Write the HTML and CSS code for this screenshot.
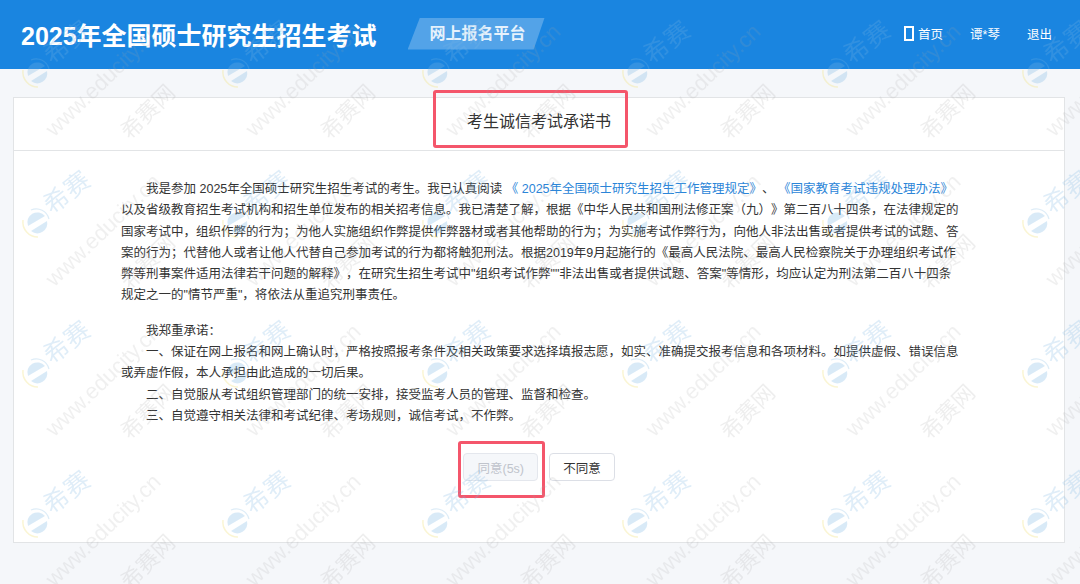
FILE: index.html
```html
<!DOCTYPE html>
<html lang="zh">

<head>
    <meta charset="UTF-8">
    <meta name="viewport" content="width=device-width, initial-scale=1.0">
    <title>考生诚信考试承诺书</title>
    <link rel="stylesheet" href="styles.css">
</head>

<body>
    <!-- 顶部导航 -->
    <header class="top-bar">
        <div class="brand">
            <span class="brand-title">2025年全国硕士研究生招生考试</span>
            <span class="brand-badge">网上报名平台</span>
        </div>
        <nav class="top-nav">
            <a class="nav-link nav-home"><i class="home-icon"></i>首页</a>
            <a class="nav-link">谭*琴</a>
            <a class="nav-link">退出</a>
        </nav>
    </header>

    <!-- 承诺书 -->
    <main class="page">
        <section class="card">
            <div class="card-head">
                <h1 class="card-title"><span class="title-text">考生诚信考试承诺书</span></h1>
            </div>
            <div class="card-body">
                <p class="para">我是参加 2025年全国硕士研究生招生考试的考生。我已认真阅读 <a class="rule-link">《 2025年全国硕士研究生招生工作管理规定》</a>、 <a class="rule-link">《国家教育考试违规处理办法》</a>以及省级教育招生考试机构和招生单位发布的相关招考信息。我已清楚了解，根据《中华人民共和国刑法修正案（九）》第二百八十四条，在法律规定的国家考试中，组织作弊的行为；为他人实施组织作弊提供作弊器材或者其他帮助的行为；为实施考试作弊行为，向他人非法出售或者提供考试的试题、答案的行为；代替他人或者让他人代替自己参加考试的行为都将触犯刑法。根据2019年9月起施行的《最高人民法院、最高人民检察院关于办理组织考试作弊等刑事案件适用法律若干问题的解释》，在研究生招生考试中"组织考试作弊""非法出售或者提供试题、答案"等情形，均应认定为刑法第二百八十四条规定之一的"情节严重"，将依法从重追究刑事责任。</p>
                <p class="para para-gap">我郑重承诺：</p>
                <p class="para">一、保证在网上报名和网上确认时，严格按照报考条件及相关政策要求选择填报志愿，如实、准确提交报考信息和各项材料。如提供虚假、错误信息或弄虚作假，本人承担由此造成的一切后果。</p>
                <p class="para">二、自觉服从考试组织管理部门的统一安排，接受监考人员的管理、监督和检查。</p>
                <p class="para">三、自觉遵守相关法律和考试纪律、考场规则，诚信考试，不作弊。</p>
                <div class="actions">
                    <button class="btn btn-agree" disabled>同意(5s)</button>
                    <button class="btn">不同意</button>
                </div>
            </div>
        </section>
    </main>

    <!-- 水印 -->
    <svg class="watermark" width="1080" height="584" aria-hidden="true">
        <defs>
            <pattern id="wm-tile" width="200" height="150" patternUnits="userSpaceOnUse">
                <path d="M28 76 L45 66 A10 10 0 0 0 28 76 Z" class="wm-logo"></path>
                <path d="M31 81 L47 71 A10 10 0 0 1 31 81 Z" class="wm-logo"></path>
                <path d="M31 60 A13 13 0 0 1 49 69" class="wm-ring"></path>
                <path d="M23 70 A15 15 0 0 0 38 87" class="wm-arc"></path>
                <text class="wm-cn" transform="translate(67 42) rotate(-38)">希赛</text>
                <text class="wm-url" transform="translate(103 80) rotate(-44)">www.educity.cn</text>
                <text class="wm-net" transform="translate(148 112) rotate(-45)">希赛网</text>
            </pattern>
        </defs>
        <rect width="1080" height="584" fill="url(#wm-tile)"></rect>
    </svg>
</body>

</html>
```

FILE: styles.css
```css
body {
    margin: 0;
    padding: 0;
    box-sizing: border-box;
    font-family: "Liberation Sans", "Noto Sans CJK SC", sans-serif;
    font-size: 12.5px;
    background: #f5f7fa;
    color: #333;
    overflow: hidden;
}

/* 顶部导航 */
.top-bar {
    display: flex;
    justify-content: space-between;
    align-items: center;
    height: 69px;
    padding: 0 28px 2px 21px;
    box-sizing: border-box;
    background: #1a85e0;
    color: #fff;
}

.brand {
    display: flex;
    align-items: center;
    gap: 31px;
}

.brand-title {
    font-size: 25px;
    font-weight: bold;
    white-space: nowrap;
}

.brand-badge {
    display: block;
    width: 137px;
    height: 32px;
    line-height: 32px;
    padding-left: 3px;
    box-sizing: border-box;
    text-align: center;
    font-size: 16px;
    font-weight: bold;
    color: #e6f2fc;
    background: rgba(255, 255, 255, 0.25);
    clip-path: polygon(9% 0, 100% 0, 92% 100%, 0 100%);
}

.top-nav {
    display: flex;
    align-items: center;
    gap: 27px;
}

.nav-link {
    display: flex;
    align-items: center;
    color: #fff;
    cursor: pointer;
}

.home-icon {
    display: block;
    width: 10px;
    height: 15px;
    margin-right: 4px;
    box-sizing: border-box;
    border: 2px solid #fff;
}

/* 承诺书卡片 */
.page {
    padding: 28px 15px 0 13px;
}

.card {
    height: 446px;
    box-sizing: border-box;
    background: #fff;
    border: 1px solid #e2e4e6;
}

.card-head {
    height: 53px;
    padding-bottom: 4px;
    box-sizing: border-box;
    border-bottom: 1px solid #e2e4e6;
    display: flex;
    justify-content: center;
    align-items: center;
}

.card-title {
    margin: 0;
    font-size: 16px;
    line-height: 22px;
    font-weight: normal;
    color: #333;
}

.title-text {
    position: relative;
    display: block;
}

/* 红色标注框 */
.title-text::after,
.btn-agree::after {
    content: "";
    position: absolute;
    box-sizing: border-box;
    border: 3px solid #f4566b;
    border-radius: 3px;
}

.title-text::after {
    top: -21px;
    right: -17px;
    bottom: -15px;
    left: -34px;
}

.card-body {
    padding: 28px 105px 0 107px;
}

.para {
    margin: 0;
    line-height: 21.3px;
    text-indent: 2em;
    text-spacing-trim: space-all;
}

.para-gap {
    margin-top: 14px;
}

.rule-link {
    color: #2b85d8;
    cursor: pointer;
}

.actions {
    display: flex;
    justify-content: center;
    gap: 11px;
    margin-top: 26px;
    padding-right: 2px;
}

.btn {
    height: 28px;
    padding: 0 13px;
    font-family: inherit;
    font-size: 12.5px;
    color: #333;
    background: #fff;
    border: 1px solid #dcdfe6;
    border-radius: 4px;
    cursor: pointer;
}

.btn-agree {
    position: relative;
    width: 75px;
    padding: 0;
    color: #c0c4cc;
    background: #f5f7fa;
    border-color: #e4e7ed;
    cursor: not-allowed;
}

.btn-agree::after {
    top: -13px;
    right: -8px;
    bottom: -18px;
    left: -6px;
}

/* 水印 */
.watermark {
    position: absolute;
    top: 0;
    left: 0;
    pointer-events: none;
}

.watermark text {
    text-anchor: middle;
    dominant-baseline: central;
}

.wm-url {
    font-size: 22px;
    fill: rgba(160, 160, 160, 0.16);
}

.wm-net {
    font-size: 22px;
    fill: rgba(160, 160, 160, 0.18);
}

.wm-cn {
    font-size: 25px;
    letter-spacing: 1px;
    fill: rgba(120, 180, 225, 0.24);
}

.wm-logo {
    fill: rgba(120, 180, 225, 0.28);
}

.wm-ring {
    fill: none;
    stroke: rgba(120, 180, 225, 0.25);
    stroke-width: 1.2;
}

.wm-arc {
    fill: none;
    stroke: rgba(240, 225, 130, 0.35);
    stroke-width: 1.5;
}
```
